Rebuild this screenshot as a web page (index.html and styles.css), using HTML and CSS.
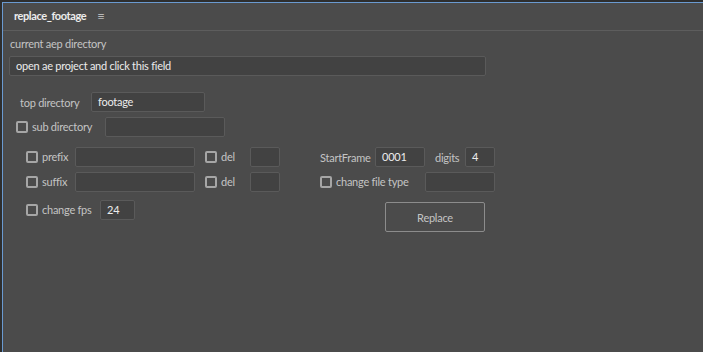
FILE: index.html
```html
<!DOCTYPE html>
<html lang="en">
<head>
    <meta charset="UTF-8">
    <title>replace_footage</title>
    <link rel="stylesheet" href="styles.css">
</head>
<body>
    <div class="panel">
        <div class="tab-bar">
            <span class="tab-title">replace_footage</span>
            <span class="tab-menu">&#8801;</span>
        </div>

        <div class="content">
            <div class="section-label">current aep directory</div>
            <div class="field field-path">open ae project and click this field</div>

            <div class="row row-top">
                <span class="label label-top">top directory</span>
                <div class="field field-top">footage</div>
            </div>

            <div class="row row-sub">
                <label class="opt opt-sub"><span class="check"></span>sub directory</label>
                <div class="field field-sub"></div>
            </div>

            <div class="row row-prefix">
                <label class="opt opt-name"><span class="check"></span>prefix</label>
                <div class="field field-name"></div>
                <label class="opt opt-del"><span class="check"></span>del</label>
                <div class="field field-del"></div>
                <span class="label label-frame">StartFrame</span>
                <div class="field field-frame">0001</div>
                <span class="label label-digits">digits</span>
                <div class="field field-digits">4</div>
            </div>

            <div class="row row-suffix">
                <label class="opt opt-name"><span class="check"></span>suffix</label>
                <div class="field field-name"></div>
                <label class="opt opt-del"><span class="check"></span>del</label>
                <div class="field field-del"></div>
                <label class="opt opt-type"><span class="check"></span>change file type</label>
                <div class="field field-type"></div>
            </div>

            <div class="row row-fps">
                <label class="opt opt-fps"><span class="check"></span>change fps</label>
                <div class="field field-fps">24</div>
                <button class="replace-btn">Replace</button>
            </div>
        </div>
    </div>
</body>
</html>
```

FILE: styles.css
```css
* {
    margin: 0;
    padding: 0;
    box-sizing: border-box;
}

body {
    font-family: 'Lato', 'Open Sans', sans-serif;
    font-size: 11px;
    letter-spacing: -0.25px;
    background: #2e2e2e;
    color: #c4c4c4;
    width: 703px;
    height: 352px;
    overflow: hidden;
    padding: 2px 0 0 2px;
}

.panel {
    height: 350px;
    background: #4b4b4b;
    border-top: 1px solid #6a9ad0;
    border-left: 1px solid #6a9ad0;
}

.tab-bar {
    height: 28px;
    border-bottom: 1px solid #5d5d5d;
    display: flex;
    align-items: center;
    padding-left: 11px;
    padding-bottom: 2px;
}

.tab-title {
    color: #ededed;
    font-weight: 700;
    letter-spacing: -0.4px;
}

.tab-menu {
    margin-left: 11px;
    color: #b8b8b8;
    font-size: 13px;
}

.content {
    padding-top: 6px;
}

.section-label {
    margin-left: 7px;
    height: 14px;
    line-height: 14px;
}

.field {
    height: 20px;
    line-height: 18px;
    background: #424242;
    border: 1px solid #5a5a5a;
    border-radius: 2px;
    color: #ececec;
    padding-left: 6px;
    flex: none;
}

.field-path {
    margin: 5px 0 0 6px;
    width: 477px;
}

.row {
    display: flex;
    align-items: center;
    height: 20px;
}

.row-top { margin-top: 16px; padding-left: 17px; }
.row-sub { margin-top: 5px; padding-left: 13px; }
.row-prefix { margin-top: 10px; padding-left: 23px; }
.row-suffix { margin-top: 5px; padding-left: 23px; }
.row-fps {
    margin-top: 8px;
    padding-left: 23px;
    align-items: flex-start;
    height: 32px;
}

.label,
.opt {
    display: flex;
    align-items: center;
    flex: none;
    white-space: nowrap;
}

.opt {
    padding-bottom: 2px;
}

.check {
    width: 12px;
    height: 12px;
    border: 2px solid #a6a6a6;
    border-radius: 2px;
    margin: 2px 4px 0 0;
    flex: none;
}

.label-top { width: 71px; }
.field-top { width: 114px; }

.opt-sub { width: 89px; }
.field-sub { width: 120px; }

.opt-name { width: 49px; }
.field-name { width: 120px; }

.opt-del { width: 45px; margin-left: 10px; }
.field-del { width: 30px; }

.label-frame { width: 55px; margin-left: 40px; }
.field-frame { width: 50px; }

.label-digits { width: 30px; margin-left: 10px; }
.field-digits { width: 30px; }

.opt-type { width: 105px; margin-left: 40px; }
.field-type { width: 70px; }

.opt-fps { width: 74px; height: 20px; }
.field-fps { width: 35px; }

.replace-btn {
    margin: 2px 0 0 250px;
    width: 100px;
    height: 30px;
    background: transparent;
    border: 1px solid #8c8c8c;
    border-radius: 2px;
    color: #c4c4c4;
    font-family: inherit;
    font-size: 11px;
    letter-spacing: -0.25px;
}
```
